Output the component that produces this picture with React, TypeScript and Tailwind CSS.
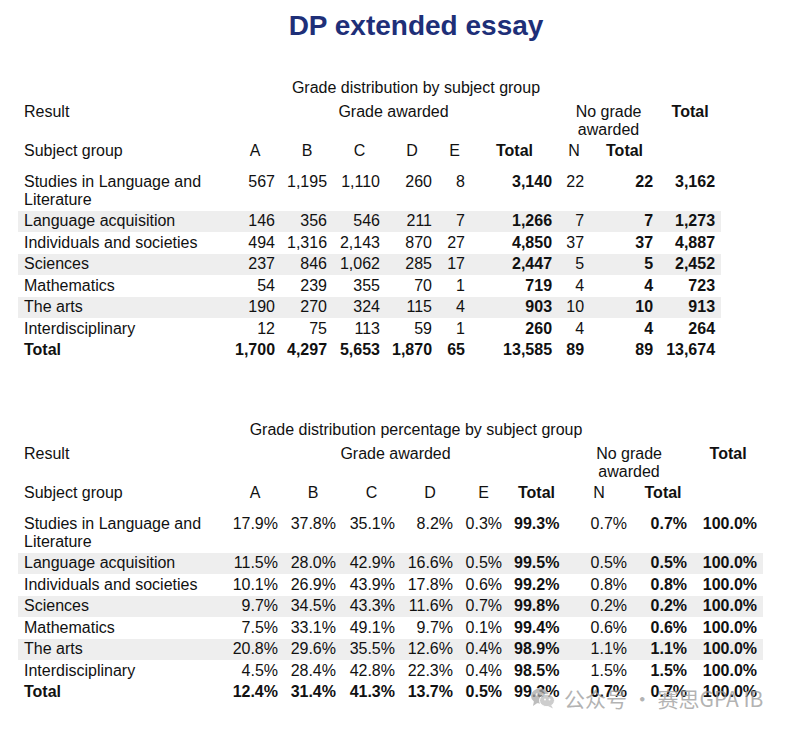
const counts: [string, string[]][] = [
  ["Studies in Language and Literature", ["567", "1,195", "1,110", "260", "8", "3,140", "22", "22", "3,162"]],
  ["Language acquisition", ["146", "356", "546", "211", "7", "1,266", "7", "7", "1,273"]],
  ["Individuals and societies", ["494", "1,316", "2,143", "870", "27", "4,850", "37", "37", "4,887"]],
  ["Sciences", ["237", "846", "1,062", "285", "17", "2,447", "5", "5", "2,452"]],
  ["Mathematics", ["54", "239", "355", "70", "1", "719", "4", "4", "723"]],
  ["The arts", ["190", "270", "324", "115", "4", "903", "10", "10", "913"]],
  ["Interdisciplinary", ["12", "75", "113", "59", "1", "260", "4", "4", "264"]],
  ["Total", ["1,700", "4,297", "5,653", "1,870", "65", "13,585", "89", "89", "13,674"]],
]

const percents: [string, string[]][] = [
  ["Studies in Language and Literature", ["17.9%", "37.8%", "35.1%", "8.2%", "0.3%", "99.3%", "0.7%", "0.7%", "100.0%"]],
  ["Language acquisition", ["11.5%", "28.0%", "42.9%", "16.6%", "0.5%", "99.5%", "0.5%", "0.5%", "100.0%"]],
  ["Individuals and societies", ["10.1%", "26.9%", "43.9%", "17.8%", "0.6%", "99.2%", "0.8%", "0.8%", "100.0%"]],
  ["Sciences", ["9.7%", "34.5%", "43.3%", "11.6%", "0.7%", "99.8%", "0.2%", "0.2%", "100.0%"]],
  ["Mathematics", ["7.5%", "33.1%", "49.1%", "9.7%", "0.1%", "99.4%", "0.6%", "0.6%", "100.0%"]],
  ["The arts", ["20.8%", "29.6%", "35.5%", "12.6%", "0.4%", "98.9%", "1.1%", "1.1%", "100.0%"]],
  ["Interdisciplinary", ["4.5%", "28.4%", "42.8%", "22.3%", "0.4%", "98.5%", "1.5%", "1.5%", "100.0%"]],
  ["Total", ["12.4%", "31.4%", "41.3%", "13.7%", "0.5%", "99.3%", "0.7%", "0.7%", "100.0%"]],
]

// numeric columns that are always bold: Total, no-grade Total, grand Total
const boldCols = [5, 7, 8]
const grades = ["A", "B", "C", "D", "E"]

function GradeTable({ title, rows, cols, width }: { title: string; rows: [string, string[]][]; cols: string[]; width: string }) {
  return (
    <section>
      <div className="pl-[46px] text-center leading-[18px]">{title}</div>
      <table className={`ml-[18px] table-fixed border-collapse ${width}`}>
        <colgroup>
          {cols.map((c, i) => (
            <col key={i} className={c} />
          ))}
        </colgroup>
        <thead>
          <tr className="align-top leading-[18px]">
            <td className="px-[6px] pt-[6px] pb-[3px] text-left">Result</td>
            <td colSpan={6} className="px-[6px] pt-[6px] pb-[3px] text-center">Grade awarded</td>
            <td colSpan={2} className="px-[6px] pt-[6px] pb-[3px] text-center">
              No grade
              <br />
              awarded
            </td>
            <td className="px-[6px] pt-[6px] pb-[3px] text-center font-bold">Total</td>
          </tr>
          <tr className="align-top leading-[18px]">
            <td className="px-[6px] pb-[11px] text-left">Subject group</td>
            {grades.map((g) => (
              <td key={g} className="px-[6px] pb-[11px] text-center">{g}</td>
            ))}
            <td className="px-[6px] pb-[11px] text-center font-bold">Total</td>
            <td className="px-[6px] pb-[11px] text-center">N</td>
            <td className="px-[6px] pb-[11px] text-center font-bold">Total</td>
            <td className="pb-[11px]"></td>
          </tr>
        </thead>
        <tbody>
          {rows.map(([name, vals], r) => {
            const isTotal = r === rows.length - 1
            const shaded = r % 2 === 1 && !isTotal
            return (
              <tr key={name} className={`align-top leading-[18px] ${shaded ? "bg-[#eeeeee]" : ""} ${isTotal ? "font-bold" : ""}`}>
                <td className="px-[6px] py-[1.75px] text-left">{name}</td>
                {vals.map((v, i) => (
                  <td key={i} className={`px-[6px] py-[1.75px] text-right whitespace-nowrap ${boldCols.includes(i) ? "font-bold" : ""}`}>
                    {v}
                  </td>
                ))}
              </tr>
            )
          })}
        </tbody>
      </table>
    </section>
  )
}

function Watermark() {
  return (
    <div className="absolute left-[530px] top-[686px] flex items-center gap-[8px] text-[21px] leading-[24px] text-[#9a9a9a]/75 font-['Noto_Sans_CJK_SC',sans-serif] pointer-events-none">
      <svg width="26" height="22" viewBox="0 0 26 22" className="opacity-75">
        <ellipse cx="10" cy="9" rx="9" ry="7.5" fill="#a8a8a8" />
        <path d="M4 14 L3 19 L8 15.5 Z" fill="#a8a8a8" />
        <ellipse cx="17" cy="13.5" rx="7.5" ry="6.2" fill="#bdbdbd" stroke="#fff" strokeWidth="1" />
        <path d="M21 18 L23 21.5 L18 19 Z" fill="#bdbdbd" />
        <circle cx="7" cy="7.5" r="1.2" fill="#fff" />
        <circle cx="13" cy="7.5" r="1.2" fill="#fff" />
        <circle cx="15" cy="12.5" r="1" fill="#fff" />
        <circle cx="19.5" cy="12.5" r="1" fill="#fff" />
      </svg>
      <span className="whitespace-nowrap">公众号 · 赛思GPA IB</span>
    </div>
  )
}

export default function App() {
  return (
    <main className="relative w-[786px] min-h-[729px] overflow-hidden bg-white text-[16px] text-[#111] font-['Liberation_Sans',Arial,sans-serif]">
      <h1 className="pl-[46px] pt-[10px] text-center text-[28px] leading-[32px] font-bold text-[#1e2f78]">DP extended essay</h1>

      <div className="mt-[37px]">
        <GradeTable
          title="Grade distribution by subject group"
          rows={counts}
          width="w-[703px]"
          cols={["w-[211px]", "w-[52px]", "w-[52px]", "w-[53px]", "w-[52px]", "w-[33px]", "w-[87px]", "w-[32px]", "w-[69px]", "w-[62px]"]}
        />
      </div>

      <div className="mt-[60px]">
        <GradeTable
          title="Grade distribution percentage by subject group"
          rows={percents}
          width="w-[745px]"
          cols={["w-[208px]", "w-[58px]", "w-[58px]", "w-[59px]", "w-[58px]", "w-[49px]", "w-[57px]", "w-[68px]", "w-[60px]", "w-[70px]"]}
        />
      </div>

      <Watermark />
    </main>
  )
}
